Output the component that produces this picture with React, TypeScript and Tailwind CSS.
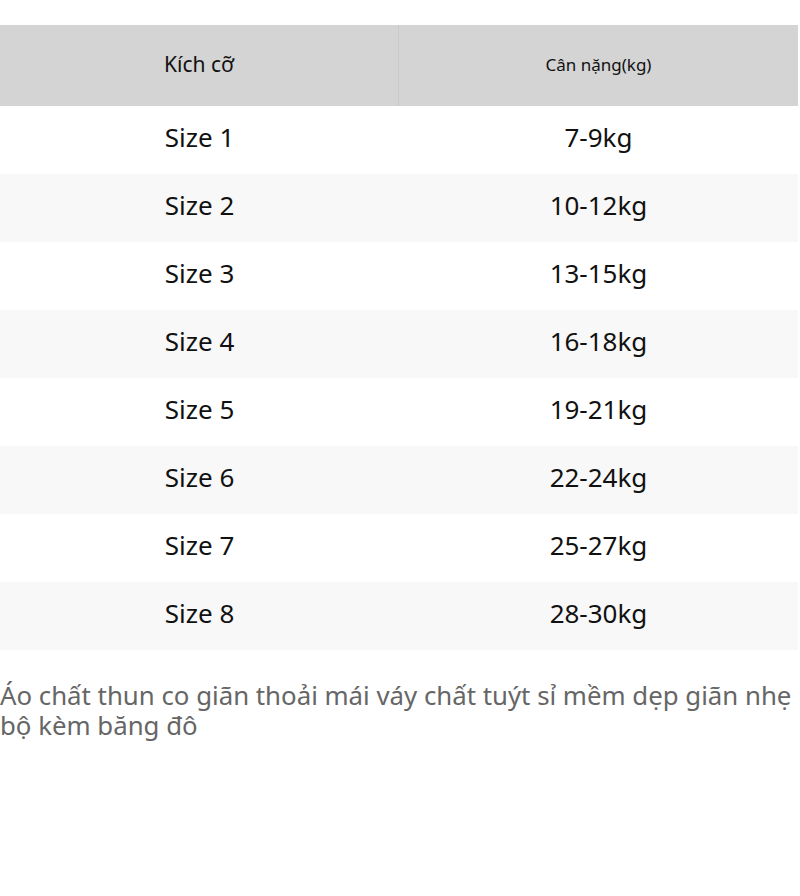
import React from "react";

const rows = [
  { size: "Size 1", weight: "7-9kg" },
  { size: "Size 2", weight: "10-12kg" },
  { size: "Size 3", weight: "13-15kg" },
  { size: "Size 4", weight: "16-18kg" },
  { size: "Size 5", weight: "19-21kg" },
  { size: "Size 6", weight: "22-24kg" },
  { size: "Size 7", weight: "25-27kg" },
  { size: "Size 8", weight: "28-30kg" },
];

const App: React.FC = () => {
  return (
    <div
      className="w-[800px] min-h-[896px] bg-white pt-[25px]"
      style={{ fontFamily: '"Noto Sans", "Open Sans", sans-serif' }}
    >
      <div className="w-[798px]">
        {/* Header */}
        <div className="grid grid-cols-2 h-[81px] bg-[#d4d4d4] text-[#111]">
          <div className="flex items-center justify-center border-r border-[#cacaca] pb-[2px] text-[21px]">
            Kích cỡ
          </div>
          <div className="flex items-center justify-center pb-[2px] text-[17px]">Cân nặng(kg)</div>
        </div>

        {/* Rows */}
        {rows.map((r, i) => (
          <div
            key={r.size}
            className={`grid grid-cols-2 h-[68px] text-[26px] text-[#111] ${
              i % 2 === 1 ? "bg-[#f8f8f8]" : "bg-white"
            }`}
          >
            <div className="flex items-center justify-center pb-[5px]">{r.size}</div>
            <div className="flex items-center justify-center pb-[5px]">{r.weight}</div>
          </div>
        ))}
      </div>

      <p className="mt-[30px] text-[25.8px] leading-[30px] text-[#666]">
        Áo chất thun co giãn thoải mái váy chất tuýt sỉ mềm dẹp giãn nhẹ bộ kèm băng đô
      </p>
    </div>
  );
};

export default App;
